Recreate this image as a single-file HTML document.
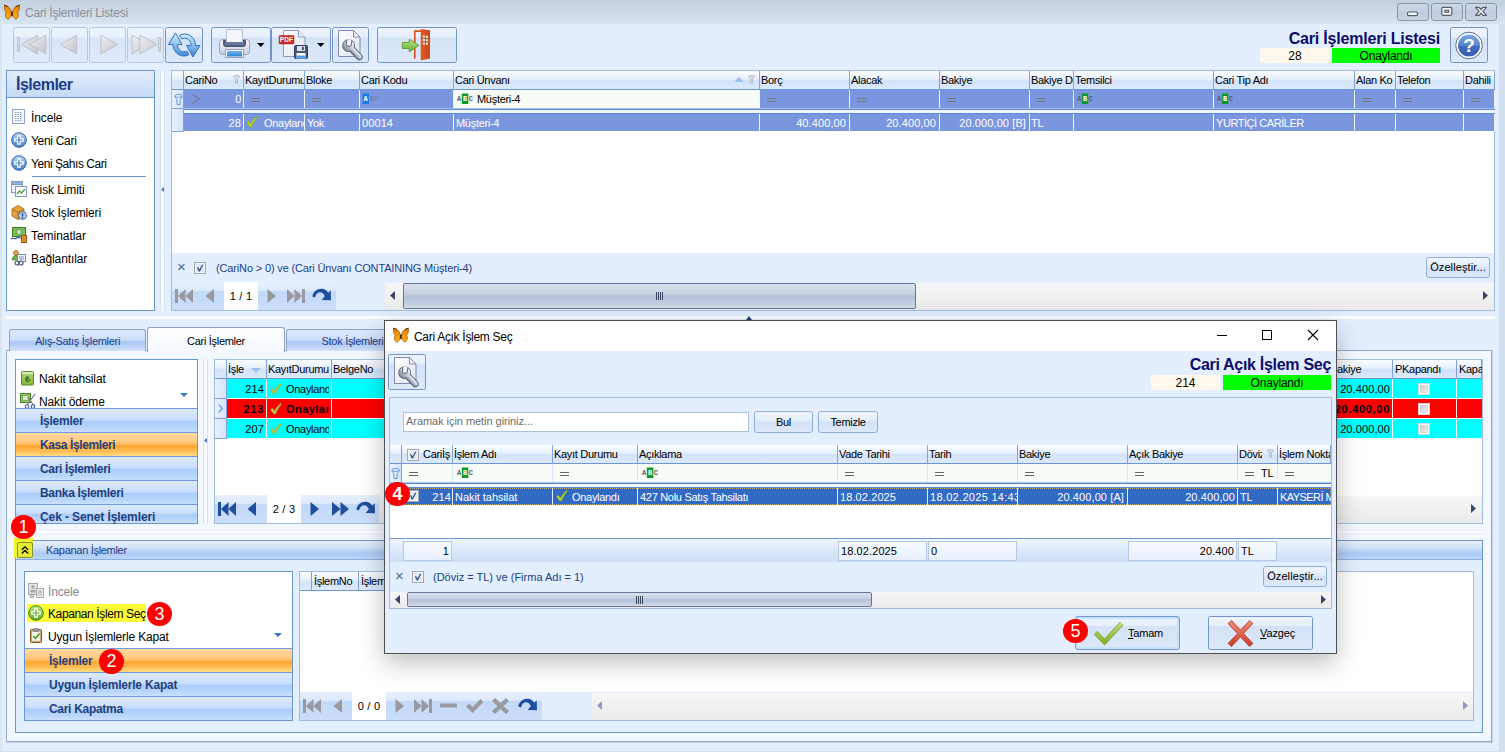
<!DOCTYPE html>
<html lang="tr"><head><meta charset="utf-8"><title>Cari İşlemleri Listesi</title>
<style>
*{box-sizing:border-box}
html,body{margin:0;padding:0}
body{width:1505px;height:752px;position:relative;overflow:hidden;background:#D2DFEF;font:11px "Liberation Sans","DejaVu Sans",sans-serif;color:#000}
.a{position:absolute}
.t{position:absolute;white-space:nowrap;overflow:hidden;font-size:11px;letter-spacing:-0.3px}
.s{position:absolute;white-space:nowrap;overflow:hidden;font-size:12px;letter-spacing:-0.4px}
.sb{position:absolute;white-space:nowrap;overflow:hidden;font-size:12px;font-weight:bold;letter-spacing:-0.1px;color:#1F3F7F}
.n{letter-spacing:0.1px}
.r{text-align:right}
.c{text-align:center}
.w{color:#fff}
.hd{background:linear-gradient(#FBFDFF 0%,#E6F0FC 45%,#D3E3F9 55%,#DCE9FB 100%);border-right:1px solid #7EA4DB;border-bottom:1px solid #6C97D6}
.btn{border:1px solid #7494C8;border-radius:2.5px;background:linear-gradient(#EDF4FD 0%,#E6EFFB 27%,#D3E2F6 29%,#DDE9FA 100%)}
.btnd{border:1px solid #B5C9E6;border-radius:2.5px;background:linear-gradient(#EDF4FD 0%,#E8F1FC 27%,#D8E5F8 29%,#E0EBFA 100%)}
.sbtn{border:1px solid #8FAFDD;border-radius:3px;background:linear-gradient(#F1F6FD 0%,#E2ECFA 45%,#D3E2F7 50%,#DEE9FA 100%)}
.gh{background:linear-gradient(#DCEAFC 0%,#C9DEFA 46%,#ABCDF9 54%,#B9D6FA 82%,#CBE0FC 100%);border-top:1px solid #6F9ADB}
.go{background:linear-gradient(#FFD9A2 0%,#FFC77A 44%,#FFA633 56%,#FFBE55 80%,#FFDD86 100%);border-top:1px solid #6F9ADB}
.nav{background:linear-gradient(#E6F0FD 0%,#DDEAFC 30%,#C3D9F9 34%,#CBDEF9 100%)}
.sc{background:linear-gradient(#F6F6F6,#EBEBEB)}
.badge{position:absolute;width:25.2px;height:24.8px;border-radius:50%;background:#FF0000;color:#fff;font-size:18px;line-height:25px;text-align:center;letter-spacing:0}
svg{position:absolute;overflow:visible}
</style></head>
<body>
<div class="a " style="left:0px;top:0px;width:1505px;height:24px;background:linear-gradient(#C2CFDC,#D8E5F1)"></div>
<div class="a " style="left:2px;top:24px;width:1497px;height:727px;background:#E3EFFF"></div>
<div class="a " style="left:0px;top:24px;width:2px;height:728px;background:#DAE5F2"></div>
<svg style="left:4px;top:5px" width="16" height="15" viewBox="0 0 16 15"><defs><linearGradient id="bf1" x1="0" y1="0" x2="0" y2="1"><stop offset="0" stop-color="#E07C00"/><stop offset="0.5" stop-color="#F59A06"/><stop offset="1" stop-color="#FFB20A"/></linearGradient></defs>
<path d="M7.200 6.800C6.600 3.200 4 0.600 0.500 0.300C0 2.800 0.500 5.800 2.200 7.200C0.800 8.800 1.200 12.500 3.600 14.200C5.500 13.800 6.800 11.500 7.300 9.500Z" fill="url(#bf1)" stroke="#7A3E0A" stroke-width="0.600"/>
<path d="M8.600 6.800C9.200 3.200 11.800 0.600 15.300 0.300C15.800 2.800 15.300 5.800 13.600 7.200C15 8.800 14.600 12.500 12.200 14.200C10.300 13.800 9 11.500 8.500 9.500Z" fill="url(#bf1)" stroke="#7A3E0A" stroke-width="0.600"/>
<path d="M0.300 0.200C1.500 0.400 2.600 0.900 3.600 1.600M15.500 0.200C14.300 0.400 13.200 0.900 12.200 1.600" stroke="#4A2208" stroke-width="1" fill="none"/>
<rect x="7.100" y="6.200" width="1.600" height="5.200" rx="0.800" fill="#3A1810"/></svg>
<div class="s" style="left:25px;top:4px;width:200px;height:18px;line-height:18px;color:#8E8E96;letter-spacing:-0.2px">Cari İşlemleri Listesi</div>
<div class="a " style="left:1397px;top:3px;width:32px;height:18px;border:1px solid #8796B2;border-radius:3px;background:linear-gradient(#CDD8E6,#C3CFDF 50%,#BFCCDD 52%,#CAD5E4)"></div>
<svg style="left:1397px;top:3px" width="32" height="18" viewBox="0 0 32 18"><rect x="10.500" y="9" width="10" height="3.600" rx="1.200" fill="#F1F2F4" stroke="#565E6E" stroke-width="1.200"/></svg>
<div class="a " style="left:1431px;top:3px;width:32px;height:18px;border:1px solid #8796B2;border-radius:3px;background:linear-gradient(#CDD8E6,#C3CFDF 50%,#BFCCDD 52%,#CAD5E4)"></div>
<svg style="left:1431px;top:3px" width="32" height="18" viewBox="0 0 32 18"><rect x="10.800" y="4.300" width="10" height="8" rx="1.200" fill="#F1F2F4" stroke="#565E6E" stroke-width="1.200"/><rect x="13.800" y="7.300" width="4" height="2" fill="#BCC8D8" stroke="#565E6E" stroke-width="1.100"/></svg>
<div class="a " style="left:1465px;top:3px;width:32px;height:18px;border:1px solid #8796B2;border-radius:3px;background:linear-gradient(#CDD8E6,#C3CFDF 50%,#BFCCDD 52%,#CAD5E4)"></div>
<svg style="left:1465px;top:3px" width="32" height="18" viewBox="0 0 32 18"><path d="M10.500 4.300h3.600l1.900 2.200l1.900-2.200h3.600l-3.600 4l3.600 4h-3.600l-1.900-2.200l-1.900 2.200h-3.600l3.600-4z" fill="#F1F2F4" stroke="#565E6E" stroke-width="1.200" stroke-linejoin="round"/></svg>
<div class="a btnd" style="left:13px;top:27px;width:37px;height:36px;"></div>
<svg style="left:13px;top:27px" width="37" height="36" viewBox="0 0 37 36"><defs><linearGradient id="gd" x1="0" y1="0" x2="1" y2="1"><stop offset="0" stop-color="#F2F2F2"/><stop offset="1" stop-color="#BFC3CB"/></linearGradient></defs><rect x="4.5" y="10.5" width="2" height="14" fill="url(#gd)" stroke="#BFC3CA" stroke-width="1"/><path d="M24.5 8.2V26.8L8.2 17.5z" fill="url(#gd)" stroke="#BFC3CA" stroke-width="1"/><path d="M32.800 8.2V26.8L16.500 17.5z" fill="url(#gd)" stroke="#BFC3CA" stroke-width="1"/></svg>
<div class="a btnd" style="left:51px;top:27px;width:37px;height:36px;"></div>
<svg style="left:51px;top:27px" width="37" height="36" viewBox="0 0 37 36"><defs><linearGradient id="gd" x1="0" y1="0" x2="1" y2="1"><stop offset="0" stop-color="#F2F2F2"/><stop offset="1" stop-color="#BFC3CB"/></linearGradient></defs><path d="M25.600 8.2V26.8L9.300 17.5z" fill="url(#gd)" stroke="#BFC3CA" stroke-width="1"/></svg>
<div class="a btnd" style="left:89px;top:27px;width:37px;height:36px;"></div>
<svg style="left:89px;top:27px" width="37" height="36" viewBox="0 0 37 36"><defs><linearGradient id="gd" x1="0" y1="0" x2="1" y2="1"><stop offset="0" stop-color="#F2F2F2"/><stop offset="1" stop-color="#BFC3CB"/></linearGradient></defs><path d="M12 8.2V26.8L28.600 17.5z" fill="url(#gd)" stroke="#BFC3CA" stroke-width="1"/></svg>
<div class="a btnd" style="left:127px;top:27px;width:37px;height:36px;"></div>
<svg style="left:127px;top:27px" width="37" height="36" viewBox="0 0 37 36"><defs><linearGradient id="gd" x1="0" y1="0" x2="1" y2="1"><stop offset="0" stop-color="#F2F2F2"/><stop offset="1" stop-color="#BFC3CB"/></linearGradient></defs><path d="M5 8.2V26.8L22 17.5z" fill="url(#gd)" stroke="#BFC3CA" stroke-width="1"/><path d="M13 8.2V26.8L30 17.5z" fill="url(#gd)" stroke="#BFC3CA" stroke-width="1"/><rect x="31.500" y="10.500" width="2" height="14" fill="url(#gd)" stroke="#BFC3CA" stroke-width="1"/></svg>
<div class="a btn" style="left:165px;top:27px;width:38px;height:36px;"></div>
<svg style="left:165px;top:27px" width="38" height="36" viewBox="0 0 38 36"><defs><linearGradient id="rb" x1="0" y1="0" x2="0" y2="1"><stop offset="0" stop-color="#DDF0FB"/><stop offset="0.5" stop-color="#8DC3EC"/><stop offset="1" stop-color="#3F88D0"/></linearGradient>
<linearGradient id="rb2" x1="0" y1="0" x2="0" y2="1"><stop offset="0" stop-color="#D5ECFA"/><stop offset="0.5" stop-color="#84BDE9"/><stop offset="1" stop-color="#3580CB"/></linearGradient></defs>
<path d="M10.500 6L3.500 17.500h4.400c0.300 6.500 5 11.500 11 11.500c2 0 3.600-0.500 5-1.300l-2-3.700c-0.900 0.500-1.900 0.800-3 0.800c-3.600 0-6.300-3-6.500-7.300h4.600z" fill="url(#rb)" stroke="#3273BC" stroke-width="1" stroke-linejoin="round"/>
<path d="M28 30L35 18.500h-4.400c-0.300-6.500-5-11.500-11-11.500c-2 0-3.600 0.500-5 1.300l2 3.700c0.900-0.500 1.900-0.800 3-0.800c3.600 0 6.300 3 6.500 7.300h-4.600z" fill="url(#rb2)" stroke="#3273BC" stroke-width="1" stroke-linejoin="round"/></svg>
<div class="a btn" style="left:211px;top:27px;width:60px;height:36px;"></div>
<svg style="left:211px;top:27px" width="59" height="36" viewBox="0 0 59 36"><defs><linearGradient id="pb" x1="0" y1="0" x2="0" y2="1"><stop offset="0" stop-color="#F4F6FB"/><stop offset="1" stop-color="#C5CDE2"/></linearGradient>
<linearGradient id="pt" x1="0" y1="0" x2="0" y2="1"><stop offset="0" stop-color="#6FB4EE"/><stop offset="1" stop-color="#2E86DC"/></linearGradient></defs>
<rect x="8.500" y="12.500" width="30" height="15" rx="3" fill="url(#pb)" stroke="#98A3C4"/>
<path d="M12 13h23v4c0 2-1.500 3-3 3h-17c-1.500 0-3-1-3-3z" fill="#4C5A7C"/>
<rect x="15.500" y="2.500" width="16" height="13" fill="#F5F6FA" stroke="#B9C0D4"/>
<path d="M14 15h19v3h-19z" fill="#6A7899"/>
<rect x="14.500" y="22.500" width="18" height="8" fill="#FAFBFE" stroke="#98A3C4"/>
<rect x="16" y="24" width="15" height="5.500" fill="url(#pt)"/><path d="M46 16h7.500l-3.750 4z" fill="#000"/></svg>
<div class="a btn" style="left:271px;top:27px;width:60px;height:36px;"></div>
<svg style="left:272px;top:27px" width="58" height="36" viewBox="0 0 58 36"><defs><linearGradient id="pg" x1="0" y1="0" x2="1" y2="1"><stop offset="0" stop-color="#FFFFFF"/><stop offset="1" stop-color="#DDE3F2"/></linearGradient></defs>
<path d="M11.500 3.500h15l6.500 6.500v19.500h-21.500z" fill="url(#pg)" stroke="#8E99BD"/>
<path d="M26.500 3.500v6.500h6.500" fill="#EEF1F8" stroke="#8E99BD"/>
<rect x="7" y="8.500" width="15" height="8.500" rx="1" fill="#CC2A26" stroke="#B01C1C" stroke-width="0.500"/>
<text x="14.500" y="15.200" font-family="Liberation Sans,sans-serif" font-size="6.500" font-weight="bold" fill="#fff" text-anchor="middle" letter-spacing="0.200">PDF</text>
<rect x="22.500" y="18.500" width="13" height="13" rx="1" fill="#4A5474" stroke="#353D58"/>
<rect x="25" y="19" width="8" height="5" fill="#D9DFEC"/><rect x="30" y="19.800" width="1.800" height="3.200" fill="#3A4668"/>
<rect x="24.500" y="26" width="9" height="5.500" fill="#FFFFFF"/><rect x="24.500" y="28.500" width="9" height="3" fill="#4F9BE6"/><path d="M45 16h7.500l-3.750 4z" fill="#000"/></svg>
<div class="a btn" style="left:332px;top:27px;width:37px;height:36px;"></div>
<svg style="left:332px;top:27px" width="37" height="36" viewBox="0 0 37 36"><defs><linearGradient id="wg1" x1="0" y1="0" x2="1" y2="1"><stop offset="0" stop-color="#FFFFFF"/><stop offset="1" stop-color="#DDE3F2"/></linearGradient>
<linearGradient id="wm1" x1="0" y1="0" x2="0" y2="1"><stop offset="0" stop-color="#F4F6F8"/><stop offset="0.45" stop-color="#C9CFD9"/><stop offset="1" stop-color="#7F8B9F"/></linearGradient>
<clipPath id="wc1"><circle cx="16.6" cy="18.6" r="6.300"/></clipPath></defs>
<path d="M6.500 3.500h15l6.500 6.500v19.500h-21.500z" fill="url(#wg1)" stroke="#8088B8"/>
<path d="M21.500 3.500v6.500h6.500z" fill="#F4F6FB" stroke="#8088B8" stroke-linejoin="round"/>
<g transform="rotate(47 16.6 18.6)">
<rect x="16.6" y="16.200000000000003" width="18" height="4.800" rx="2.400" fill="none" stroke="#586377" stroke-width="2"/>
<circle cx="16.6" cy="18.6" r="5.500" fill="none" stroke="#586377" stroke-width="1.800"/>
<rect x="16.6" y="16.200000000000003" width="18" height="4.800" rx="2.400" fill="url(#wm1)"/>
<circle cx="16.6" cy="18.6" r="5.500" fill="url(#wm1)"/>
</g>
<g clip-path="url(#wc1)"><rect transform="rotate(8 16.6 18.6)" x="14.100000000000001" y="9.600000000000001" width="5" height="9.500" rx="1" fill="#F1F3F9" stroke="#586377" stroke-width="0.900"/></g></svg>
<div class="a btn" style="left:377px;top:27px;width:80px;height:36px;"></div>
<svg style="left:377px;top:27px" width="80" height="36" viewBox="0 0 80 36"><defs><linearGradient id="ga" x1="0" y1="0" x2="0" y2="1"><stop offset="0" stop-color="#C3E88C"/><stop offset="1" stop-color="#5FA82C"/></linearGradient>
<linearGradient id="dr" x1="0" y1="0" x2="1" y2="0"><stop offset="0" stop-color="#E55A22"/><stop offset="1" stop-color="#C9481A"/></linearGradient></defs>
<path d="M37 3.300h8v1.700h-6.400v26.800h-1.600z" fill="#D9501F"/>
<path d="M43.700 2L53 3.300V31.400L43.700 33.500z" fill="url(#dr)"/>
<g fill="#DFF3EC"><rect x="45.800" y="8.500" width="2.200" height="2.300"/><rect x="49" y="8.700" width="2" height="2.200"/><rect x="45.800" y="12" width="2.200" height="2.200"/><rect x="49" y="12.100" width="2" height="2.100"/><rect x="45.800" y="15.600" width="2.200" height="2.200"/><rect x="49" y="15.600" width="2" height="2.100"/></g>
<path d="M25.300 15.500h7v-3.300l9.500 6.300l-9.500 6.300v-3.300h-7z" fill="url(#ga)" stroke="#62A030" stroke-linejoin="round"/></svg>
<div class="t" style="left:1200px;top:29px;width:240px;height:20px;line-height:20px;font-size:16px;font-weight:bold;color:#0D0D6B;text-align:right;letter-spacing:-0.2px">Cari İşlemleri Listesi</div>
<div class="t" style="left:1260px;top:48px;width:70px;height:15px;line-height:15px;background:#FFF8EC;text-align:center;font-size:12px;letter-spacing:0;line-height:16px">28</div>
<div class="t" style="left:1332px;top:48px;width:108px;height:15px;line-height:15px;background:#00FF00;text-align:center;font-size:12px;letter-spacing:-0.2px;line-height:16px">Onaylandı</div>
<div class="a btn" style="left:1450px;top:27px;width:38px;height:36px;"></div>
<svg style="left:1450px;top:27px" width="38" height="36" viewBox="0 0 38 36"><defs><linearGradient id="hg" x1="0" y1="0" x2="0" y2="1"><stop offset="0" stop-color="#7DA8E0"/><stop offset="0.5" stop-color="#5585CC"/><stop offset="0.55" stop-color="#3F6BBA"/><stop offset="1" stop-color="#3660B2"/></linearGradient></defs>
<circle cx="19" cy="18.500" r="13.300" fill="#FFFFFF" stroke="#5A6898" stroke-width="1"/>
<circle cx="19" cy="18.500" r="11" fill="url(#hg)"/>
<text x="19" y="24.500" font-family="Liberation Sans,sans-serif" font-size="19" font-weight="bold" fill="#fff" text-anchor="middle">?</text></svg>
<div class="a " style="left:6px;top:70px;width:149px;height:241px;border:1px solid #6A97D4;background:#fff"></div>
<div class="a " style="left:7px;top:71px;width:147px;height:27px;background:linear-gradient(#E4EEFC,#C4D9F7);border-bottom:1px solid #6A97D4"></div>
<div class="t" style="left:16px;top:74px;width:130px;height:22px;line-height:22px;font-size:16px;font-weight:bold;color:#1D3D86;letter-spacing:-0.5px">İşlemler</div>
<div class="s" style="left:31px;top:109px;width:120px;height:18px;line-height:18px;letter-spacing:-0.1px">İncele</div>
<svg style="left:11px;top:109px" width="15" height="15" viewBox="0 0 15 15"><rect x="1.500" y="0.500" width="12" height="14" fill="#F7FAFE" stroke="#8FA6CC"/><g stroke="#7F9AC8" stroke-width="1" stroke-dasharray="1.500 1"><path d="M4 3.500h7M4 5.500h7M4 7.500h7M4 9.500h7M4 11.500h7"/></g></svg>
<div class="s" style="left:31px;top:132px;width:120px;height:18px;line-height:18px;letter-spacing:-0.3px">Yeni Cari</div>
<svg style="left:11px;top:132px" width="16" height="16" viewBox="0 0 16 16"><defs><linearGradient id="pplus" x1="0" y1="0" x2="0" y2="1"><stop offset="0" stop-color="#B9D6F4"/><stop offset="1" stop-color="#3F7FCB"/></linearGradient></defs><circle cx="8" cy="8" r="7.300" fill="url(#pplus)" stroke="#2B62A8"/><path d="M6.200 3.200h3.600v3h3v3.600h-3v3h-3.600v-3h-3v-3.600h3z" fill="#fff"/><path d="M7.400 4.400h1.200v3h3v1.200h-3v3h-1.200v-3h-3v-1.200h3z" fill="#3F7FCB"/></svg>
<div class="s" style="left:31px;top:155px;width:120px;height:18px;line-height:18px;letter-spacing:-0.45px">Yeni Şahıs Cari</div>
<svg style="left:11px;top:155px" width="16" height="16" viewBox="0 0 16 16"><defs><linearGradient id="pplus" x1="0" y1="0" x2="0" y2="1"><stop offset="0" stop-color="#B9D6F4"/><stop offset="1" stop-color="#3F7FCB"/></linearGradient></defs><circle cx="8" cy="8" r="7.300" fill="url(#pplus)" stroke="#2B62A8"/><path d="M6.200 3.200h3.600v3h3v3.600h-3v3h-3.600v-3h-3v-3.600h3z" fill="#fff"/><path d="M7.400 4.400h1.200v3h3v1.200h-3v3h-1.200v-3h-3v-1.200h3z" fill="#3F7FCB"/></svg>
<div class="s" style="left:31px;top:181px;width:120px;height:18px;line-height:18px;letter-spacing:-0.1px">Risk Limiti</div>
<svg style="left:11px;top:181px" width="16" height="16" viewBox="0 0 16 16"><rect x="0.500" y="0.500" width="11" height="11" fill="#EAF1FB" stroke="#7D9ACB"/><rect x="0.500" y="0.500" width="11" height="3" fill="#8FB0E0" stroke="#7D9ACB"/><rect x="4.500" y="5.500" width="11" height="10" fill="#fff" stroke="#7D9ACB"/><path d="M6 13l2.500-3l2 2l3.500-4" fill="none" stroke="#3E9B3A" stroke-width="1.200"/></svg>
<div class="s" style="left:31px;top:204px;width:120px;height:18px;line-height:18px;letter-spacing:-0.15px">Stok İşlemleri</div>
<svg style="left:11px;top:204px" width="16" height="16" viewBox="0 0 16 16"><path d="M1 5l6-3.500l6 3.500v7l-6 3.500l-6-3.500z" fill="#E3A13A" stroke="#9A6514" stroke-width="0.800"/><path d="M1 5l6 3.500l6-3.500M7 8.500v7" fill="none" stroke="#9A6514" stroke-width="0.800"/><circle cx="11.500" cy="11.500" r="4" fill="#B9CCE8" stroke="#4F6FA8"/><rect x="10.800" y="9" width="1.400" height="3.500" fill="#2F4F8F"/><rect x="10.800" y="13" width="1.400" height="1.400" fill="#2F4F8F"/></svg>
<div class="s" style="left:31px;top:227px;width:120px;height:18px;line-height:18px;letter-spacing:-0.05px">Teminatlar</div>
<svg style="left:11px;top:227px" width="16" height="16" viewBox="0 0 16 16"><rect x="1.500" y="0.500" width="13" height="9" fill="#7DBB5A" stroke="#3E7A2A"/><circle cx="8" cy="5" r="2.500" fill="#CFE8BF" stroke="#3E7A2A" stroke-width="0.600"/><path d="M0 12c2-2 3.500 1 5.500-1s3 1 4.500 0" fill="none" stroke="#3A5FA8" stroke-width="1.200"/><rect x="10.500" y="8.500" width="5" height="7" fill="#E08A2A" stroke="#9A5A14"/></svg>
<div class="s" style="left:31px;top:250px;width:120px;height:18px;line-height:18px;letter-spacing:-0.1px">Bağlantılar</div>
<svg style="left:11px;top:250px" width="16" height="16" viewBox="0 0 16 16"><circle cx="5" cy="3" r="2.500" fill="#E09A4A" stroke="#9A5A1E" stroke-width="0.600"/><path d="M1 10c0-3 2-4.500 4-4.500s4 1.500 4 4.500z" fill="#6FAF4A" stroke="#3E7A2A" stroke-width="0.600"/><rect x="6.500" y="4.500" width="8" height="7" fill="#F4F6FA" stroke="#7F8FA8"/><path d="M8 7h5M8 9h5" stroke="#7F8FA8"/><circle cx="6" cy="13" r="2" fill="none" stroke="#4A5A78" stroke-width="1.200"/><circle cx="10" cy="13" r="2" fill="none" stroke="#4A5A78" stroke-width="1.200"/></svg>
<div class="a " style="left:32px;top:176px;width:114px;height:1px;background:#6A97D4"></div>
<div class="a " style="left:160px;top:70px;width:5px;height:241px;background:#F6FAFF;border-left:1px solid #D3E2F8;border-right:1px solid #D3E2F8"></div>
<svg style="left:161px;top:187px" width="3" height="5" viewBox="0 0 3 5"><path d="M3 0v5l-3-2.5z" fill="#4F79BE"/></svg>
<div class="a " style="left:171px;top:70px;width:1324px;height:241px;border:1px solid #A3BDE2;background:#fff"></div>
<div class="a hd" style="left:172px;top:71px;width:12px;height:19px;"></div>
<div class="a hd" style="left:184px;top:71px;width:60px;height:19px;"></div>
<div class="t" style="left:185px;top:71px;width:58px;height:18px;line-height:18px;">CariNo</div>
<div class="a hd" style="left:244px;top:71px;width:61px;height:19px;"></div>
<div class="t" style="left:245px;top:71px;width:59px;height:18px;line-height:18px;">KayıtDurumu</div>
<div class="a hd" style="left:305px;top:71px;width:55px;height:19px;"></div>
<div class="t" style="left:306px;top:71px;width:53px;height:18px;line-height:18px;">Bloke</div>
<div class="a hd" style="left:360px;top:71px;width:94px;height:19px;"></div>
<div class="t" style="left:361px;top:71px;width:92px;height:18px;line-height:18px;">Cari Kodu</div>
<div class="a hd" style="left:454px;top:71px;width:306px;height:19px;"></div>
<div class="t" style="left:455px;top:71px;width:304px;height:18px;line-height:18px;">Cari Ünvanı</div>
<div class="a hd" style="left:760px;top:71px;width:90px;height:19px;"></div>
<div class="t" style="left:761px;top:71px;width:88px;height:18px;line-height:18px;">Borç</div>
<div class="a hd" style="left:850px;top:71px;width:90px;height:19px;"></div>
<div class="t" style="left:851px;top:71px;width:88px;height:18px;line-height:18px;">Alacak</div>
<div class="a hd" style="left:940px;top:71px;width:90px;height:19px;"></div>
<div class="t" style="left:941px;top:71px;width:88px;height:18px;line-height:18px;">Bakiye</div>
<div class="a hd" style="left:1030px;top:71px;width:44px;height:19px;"></div>
<div class="t" style="left:1031px;top:71px;width:42px;height:18px;line-height:18px;">Bakiye Dö</div>
<div class="a hd" style="left:1074px;top:71px;width:140px;height:19px;"></div>
<div class="t" style="left:1075px;top:71px;width:138px;height:18px;line-height:18px;">Temsilci</div>
<div class="a hd" style="left:1214px;top:71px;width:141px;height:19px;"></div>
<div class="t" style="left:1215px;top:71px;width:139px;height:18px;line-height:18px;">Cari Tip Adı</div>
<div class="a hd" style="left:1355px;top:71px;width:41px;height:19px;"></div>
<div class="t" style="left:1356px;top:71px;width:39px;height:18px;line-height:18px;">Alan Ko</div>
<div class="a hd" style="left:1396px;top:71px;width:68px;height:19px;"></div>
<div class="t" style="left:1397px;top:71px;width:66px;height:18px;line-height:18px;">Telefon</div>
<div class="a hd" style="left:1464px;top:71px;width:31px;height:19px;"></div>
<div class="t" style="left:1465px;top:71px;width:29px;height:18px;line-height:18px;">Dahili</div>
<svg style="left:233px;top:75px" width="7" height="9" viewBox="0 0 7 9"><path d="M0.500 1.500c0-1.300 6-1.300 6 0c0 1-2 2-2 3v3.500h-2v-3.500c0-1-2-2-2-3z" fill="#D5DCE8" stroke="#A5B0C5" stroke-width="0.800"/></svg>
<svg style="left:748px;top:75px" width="7" height="9" viewBox="0 0 7 9"><path d="M0.500 1.500c0-1.300 6-1.300 6 0c0 1-2 2-2 3v3.500h-2v-3.500c0-1-2-2-2-3z" fill="#D5DCE8" stroke="#A5B0C5" stroke-width="0.800"/></svg>
<svg style="left:734px;top:77px" width="10" height="5" viewBox="0 0 10 5"><path d="M0 5h10l-5.0-5z" fill="#9DC0EE"/></svg>
<div class="a " style="left:172px;top:90px;width:12px;height:42px;background:linear-gradient(90deg,#EAF2FD,#D3E3F8);border-right:1px solid #7EA4DB;border-bottom:1px solid #7EA4DB"></div>
<div class="a " style="left:172px;top:108px;width:12px;height:1px;background:#7EA4DB"></div>
<svg style="left:174px;top:94px" width="9" height="12" viewBox="0 0 9 12"><path d="M1 1.500c0-1.300 7-1.300 7 0v1.500c0 1-2 1.800-2 3v4.500h-3v-4.500c0-1.200-2-2-2-3z M1 2.600c1 1 6 1 7 0" fill="#EAF2FD" stroke="#5C93DC" stroke-width="1"/></svg>
<div class="a " style="left:184px;top:90px;width:1311px;height:18px;background:#7A96DF"></div>
<div class="a " style="left:184px;top:108px;width:1311px;height:1px;background:#A9BFEA"></div>
<div class="a " style="left:184px;top:109px;width:1311px;height:1px;background:#5D8BD6"></div>
<div class="a " style="left:184px;top:110px;width:1311px;height:3px;background:#EFF5FD"></div>
<div class="a " style="left:184px;top:113px;width:1311px;height:1px;background:#5D8BD6"></div>
<div class="a " style="left:184px;top:114px;width:1311px;height:17px;background:#7A96DF"></div>
<div class="a " style="left:454px;top:90px;width:306px;height:18px;background:#F6FBF6"></div>
<div class="a " style="left:243px;top:90px;width:1px;height:18px;background:#EEF3FC"></div>
<div class="a " style="left:243px;top:114px;width:1px;height:17px;background:#EEF3FC"></div>
<div class="a " style="left:304px;top:90px;width:1px;height:18px;background:#EEF3FC"></div>
<div class="a " style="left:304px;top:114px;width:1px;height:17px;background:#EEF3FC"></div>
<div class="a " style="left:359px;top:90px;width:1px;height:18px;background:#EEF3FC"></div>
<div class="a " style="left:359px;top:114px;width:1px;height:17px;background:#EEF3FC"></div>
<div class="a " style="left:453px;top:90px;width:1px;height:18px;background:#EEF3FC"></div>
<div class="a " style="left:453px;top:114px;width:1px;height:17px;background:#EEF3FC"></div>
<div class="a " style="left:759px;top:90px;width:1px;height:18px;background:#EEF3FC"></div>
<div class="a " style="left:759px;top:114px;width:1px;height:17px;background:#EEF3FC"></div>
<div class="a " style="left:849px;top:90px;width:1px;height:18px;background:#EEF3FC"></div>
<div class="a " style="left:849px;top:114px;width:1px;height:17px;background:#EEF3FC"></div>
<div class="a " style="left:939px;top:90px;width:1px;height:18px;background:#EEF3FC"></div>
<div class="a " style="left:939px;top:114px;width:1px;height:17px;background:#EEF3FC"></div>
<div class="a " style="left:1029px;top:90px;width:1px;height:18px;background:#EEF3FC"></div>
<div class="a " style="left:1029px;top:114px;width:1px;height:17px;background:#EEF3FC"></div>
<div class="a " style="left:1073px;top:90px;width:1px;height:18px;background:#EEF3FC"></div>
<div class="a " style="left:1073px;top:114px;width:1px;height:17px;background:#EEF3FC"></div>
<div class="a " style="left:1213px;top:90px;width:1px;height:18px;background:#EEF3FC"></div>
<div class="a " style="left:1213px;top:114px;width:1px;height:17px;background:#EEF3FC"></div>
<div class="a " style="left:1354px;top:90px;width:1px;height:18px;background:#EEF3FC"></div>
<div class="a " style="left:1354px;top:114px;width:1px;height:17px;background:#EEF3FC"></div>
<div class="a " style="left:1395px;top:90px;width:1px;height:18px;background:#EEF3FC"></div>
<div class="a " style="left:1395px;top:114px;width:1px;height:17px;background:#EEF3FC"></div>
<div class="a " style="left:1463px;top:90px;width:1px;height:18px;background:#EEF3FC"></div>
<div class="a " style="left:1463px;top:114px;width:1px;height:17px;background:#EEF3FC"></div>
<div class="a " style="left:1494px;top:90px;width:1px;height:18px;background:#EEF3FC"></div>
<div class="a " style="left:1494px;top:114px;width:1px;height:17px;background:#EEF3FC"></div>
<div class="a " style="left:251px;top:98px;width:9px;height:1px;background:#777"></div>
<div class="a " style="left:251px;top:101px;width:9px;height:1px;background:#777"></div>
<div class="a " style="left:312px;top:98px;width:9px;height:1px;background:#777"></div>
<div class="a " style="left:312px;top:101px;width:9px;height:1px;background:#777"></div>
<div class="a " style="left:767px;top:98px;width:9px;height:1px;background:#777"></div>
<div class="a " style="left:767px;top:101px;width:9px;height:1px;background:#777"></div>
<div class="a " style="left:857px;top:98px;width:9px;height:1px;background:#777"></div>
<div class="a " style="left:857px;top:101px;width:9px;height:1px;background:#777"></div>
<div class="a " style="left:947px;top:98px;width:9px;height:1px;background:#777"></div>
<div class="a " style="left:947px;top:101px;width:9px;height:1px;background:#777"></div>
<div class="a " style="left:1037px;top:98px;width:9px;height:1px;background:#777"></div>
<div class="a " style="left:1037px;top:101px;width:9px;height:1px;background:#777"></div>
<div class="a " style="left:1362px;top:98px;width:9px;height:1px;background:#777"></div>
<div class="a " style="left:1362px;top:101px;width:9px;height:1px;background:#777"></div>
<div class="a " style="left:1403px;top:98px;width:9px;height:1px;background:#777"></div>
<div class="a " style="left:1403px;top:101px;width:9px;height:1px;background:#777"></div>
<div class="a " style="left:1471px;top:98px;width:9px;height:1px;background:#777"></div>
<div class="a " style="left:1471px;top:101px;width:9px;height:1px;background:#777"></div>
<svg style="left:192px;top:94px" width="8" height="10" viewBox="0 0 8 10"><path d="M0.500 0.500l7 4.500l-7 4.500" fill="none" stroke="#6E6E6E" stroke-width="1"/></svg>
<div class="t r w" style="left:200px;top:90px;width:41px;height:18px;line-height:18px;">0</div>
<svg style="left:363px;top:95px" width="17" height="9" viewBox="0 0 17 9"><rect x="-0.500" y="-1.500" width="6.500" height="10.500" fill="#1E7BE0"/><text x="0.600" y="6.300" font-family="Liberation Mono,monospace" font-size="7" font-weight="bold" fill="#fff">A</text><text x="6.400" y="6.300" font-family="Liberation Mono,monospace" font-size="7" font-weight="bold" fill="#6C7FAE">B</text><text x="11" y="6.300" font-family="Liberation Mono,monospace" font-size="7" font-weight="bold" fill="#6C7FAE">C</text></svg>
<svg style="left:457px;top:95px" width="17" height="9" viewBox="0 0 17 9"><text x="0" y="6.300" font-family="Liberation Mono,monospace" font-size="7" font-weight="bold" fill="#5F5F5F">A</text><rect x="4.800" y="-1.500" width="6.500" height="10.500" fill="#0E9A2A"/><text x="5.900" y="6.300" font-family="Liberation Mono,monospace" font-size="7" font-weight="bold" fill="#fff">B</text><text x="11.800" y="6.300" font-family="Liberation Mono,monospace" font-size="7" font-weight="bold" fill="#5F5F5F">C</text></svg>
<div class="t" style="left:477px;top:90px;width:200px;height:18px;line-height:18px;">Müşteri-4</div>
<svg style="left:1077px;top:95px" width="17" height="9" viewBox="0 0 17 9"><text x="0" y="6.300" font-family="Liberation Mono,monospace" font-size="7" font-weight="bold" fill="#5F5F5F">A</text><rect x="4.800" y="-1.500" width="6.500" height="10.500" fill="#0E9A2A"/><text x="5.900" y="6.300" font-family="Liberation Mono,monospace" font-size="7" font-weight="bold" fill="#fff">B</text><text x="11.800" y="6.300" font-family="Liberation Mono,monospace" font-size="7" font-weight="bold" fill="#5F5F5F">C</text></svg>
<svg style="left:1217px;top:95px" width="17" height="9" viewBox="0 0 17 9"><text x="0" y="6.300" font-family="Liberation Mono,monospace" font-size="7" font-weight="bold" fill="#5F5F5F">A</text><rect x="4.800" y="-1.500" width="6.500" height="10.500" fill="#0E9A2A"/><text x="5.900" y="6.300" font-family="Liberation Mono,monospace" font-size="7" font-weight="bold" fill="#fff">B</text><text x="11.800" y="6.300" font-family="Liberation Mono,monospace" font-size="7" font-weight="bold" fill="#5F5F5F">C</text></svg>
<div class="t r w n" style="left:190px;top:114px;width:51px;height:18px;line-height:18px;">28</div>
<svg style="left:246px;top:116px" width="12" height="12" viewBox="0 0 12 12"><path d="M0.500 6.500l2-1.300l2 2.500c1.800-3 3.800-5.500 6.300-7.500l0.600 1c-2.500 3-4.500 6.300-5.800 9.800h-1.900z" fill="#A8D02E" stroke="#7FA514" stroke-width="0.500"/></svg>
<div class="t w" style="left:264px;top:114px;width:40px;height:18px;line-height:18px;">Onaylandı</div>
<div class="t w" style="left:307px;top:114px;width:50px;height:18px;line-height:18px;">Yok</div>
<div class="t w n" style="left:362px;top:114px;width:80px;height:18px;line-height:18px;">00014</div>
<div class="t w" style="left:456px;top:114px;width:200px;height:18px;line-height:18px;">Müşteri-4</div>
<div class="t r w n" style="left:770px;top:114px;width:76px;height:18px;line-height:18px;">40.400,00</div>
<div class="t r w n" style="left:860px;top:114px;width:76px;height:18px;line-height:18px;">20.400,00</div>
<div class="t r w n" style="left:945px;top:114px;width:81px;height:18px;line-height:18px;">20.000,00 [B]</div>
<div class="t w" style="left:1031px;top:114px;width:30px;height:18px;line-height:18px;">TL</div>
<div class="t w" style="left:1216px;top:114px;width:130px;height:18px;line-height:18px;letter-spacing:-0.45px">YURTİÇİ CARİLER</div>
<div class="a " style="left:172px;top:253px;width:1322px;height:57px;background:#E3EFFF"></div>
<div class="t" style="left:177px;top:259px;width:12px;height:16px;line-height:16px;font-size:15px;color:#4A6499;letter-spacing:0">×</div>
<svg style="left:194px;top:262px" width="12" height="12" viewBox="0 0 12 12"><rect x="0.500" y="0.500" width="11" height="11" fill="#F7F8FA" stroke="#9EA7B3"/><rect x="2" y="2" width="8" height="8" fill="#E4E8EE"/><path d="M2.800 5.300l1.400 0l1.200 2.200l2.600-4.800l1.400 0l-3.500 6.800l-1.200 0z" fill="#35558F"/></svg>
<div class="t" style="left:216px;top:259px;width:400px;height:19px;line-height:19px;color:#1D3D86;letter-spacing:-0.15px">(CariNo &gt; 0) ve (Cari Ünvanı CONTAINING Müşteri-4)</div>
<div class="a sbtn" style="left:1426px;top:257px;width:64px;height:21px;"></div>
<div class="t" style="left:1426px;top:257px;width:64px;height:20px;line-height:20px;text-align:center;letter-spacing:0.1px">Özelleştir...</div>
<div class="a nav" style="left:172px;top:282px;width:164px;height:28px;"></div>
<div class="a " style="left:224px;top:282px;width:34px;height:28px;background:#fff"></div>
<div class="t" style="left:224px;top:287px;width:34px;height:19px;line-height:19px;text-align:center;letter-spacing:0.2px">1 / 1</div>
<svg style="left:175px;top:288px" width="19" height="16" viewBox="0 0 19 16"><g fill="#9A9A9E"><rect x="0" y="1" width="3" height="14"/><path d="M10.500 1v14l-7.500-7z"/><path d="M18 1v14l-7.500-7z"/></g></svg>
<svg style="left:204px;top:288px" width="19" height="16" viewBox="0 0 19 16"><g fill="#9A9A9E"><path d="M10 1v14l-8.500-7z"/></g></svg>
<svg style="left:266px;top:288px" width="19" height="16" viewBox="0 0 19 16"><g fill="#9A9A9E"><path d="M1.500 1v14l8.500-7z"/></g></svg>
<svg style="left:287px;top:288px" width="19" height="16" viewBox="0 0 19 16"><g fill="#9A9A9E"><path d="M0 1v14l7.500-7z"/><path d="M7.500 1v14l7.500-7z"/><rect x="15" y="1" width="3" height="14"/></g></svg>
<svg style="left:312px;top:288px" width="19" height="16" viewBox="0 0 19 16"><g fill="#1F4E9E"><path d="M0.300 8.500C1.300 3 6 0 10.500 0.800C13.200 1.300 15 2.800 16.200 4.800L18.700 2.200L19 12.300L9.700 12L12.800 8.300C12 6 10.500 4.500 8.500 4.200C6 3.900 4 5.500 3 9.500Z"/></g></svg>
<div class="a sc" style="left:386px;top:283px;width:1108px;height:27px;"></div>
<svg style="left:390px;top:291px" width="5" height="9" viewBox="0 0 5 9"><path d="M5 0v9l-5-4.5z" fill="#3A4663"/></svg>
<svg style="left:1483px;top:291px" width="5" height="9" viewBox="0 0 5 9"><path d="M0 0v9l5-4.5z" fill="#3A4663"/></svg>
<div class="a " style="left:403px;top:283px;width:513px;height:26px;border:1px solid #65759F;border-radius:2px;background:linear-gradient(#D9E0EC 0%,#C8D2E3 40%,#B4C1D8 52%,#C3CEE1 80%,#D5DDEB 100%)"></div>
<div class="a " style="left:656px;top:292px;width:1px;height:8px;background:#3A4663"></div>
<div class="a " style="left:658px;top:292px;width:1px;height:8px;background:#3A4663"></div>
<div class="a " style="left:660px;top:292px;width:1px;height:8px;background:#3A4663"></div>
<div class="a " style="left:662px;top:292px;width:1px;height:8px;background:#3A4663"></div>
<div class="a " style="left:6px;top:316px;width:1489px;height:4px;background:linear-gradient(#F4F8FF 0%,#FFFFFF 30%,#FFFFFF 65%,#CFE0FA 100%)"></div>
<svg style="left:746px;top:316px" width="6" height="4" viewBox="0 0 6 4"><path d="M0 4h6l-3.0-4z" fill="#1F3F7F"/></svg>
<div class="a " style="left:6px;top:350px;width:1486px;height:392px;border:1px solid #93A9CF;background:#F3F8FE;box-shadow:1px 1px 0 #C3D2E8"></div>
<div class="a " style="left:9px;top:329px;width:137px;height:22px;border:1px solid #8FA2C6;border-bottom:none;border-radius:3px 3px 0 0;background:linear-gradient(#DEEAFB 0%,#CDDFF9 45%,#ABC8F3 58%,#C1D7F7 85%,#D3E3FA 100%)"></div>
<div class="t" style="left:9px;top:332px;width:137px;height:19px;line-height:19px;text-align:center;color:#1D3D86">Alış-Satış İşlemleri</div>
<div class="a " style="left:286px;top:329px;width:133px;height:22px;border:1px solid #8FA2C6;border-bottom:none;border-radius:3px 3px 0 0;background:linear-gradient(#DEEAFB 0%,#CDDFF9 45%,#ABC8F3 58%,#C1D7F7 85%,#D3E3FA 100%)"></div>
<div class="t" style="left:286px;top:332px;width:133px;height:19px;line-height:19px;text-align:center;color:#1D3D86">Stok İşlemleri</div>
<div class="a " style="left:147px;top:327px;width:138px;height:25px;border:1px solid #8FA2C6;border-bottom:none;border-radius:3px 3px 0 0;background:linear-gradient(#FFFFFF,#F3F8FE)"></div>
<div class="t" style="left:147px;top:332px;width:138px;height:19px;line-height:19px;text-align:center">Cari İşlemler</div>
<div class="a " style="left:15px;top:359px;width:183px;height:165px;border:1px solid #6A97D4;background:#fff"></div>
<svg style="left:21px;top:371px" width="13" height="15" viewBox="0 0 13 15"><defs><linearGradient id="ntg" x1="0" y1="0" x2="0" y2="1"><stop offset="0" stop-color="#B5D878"/><stop offset="1" stop-color="#7FB23A"/></linearGradient></defs><rect x="0.500" y="0.500" width="12" height="13.500" rx="1" fill="url(#ntg)" stroke="#5B8A2A"/><rect x="1" y="1" width="11" height="2" fill="#D7ECB0"/><path d="M5.800 5v5.500c1.800 0 3-0.800 3.200-2.500M4.200 7.600l3.600-1.600M4.200 9.200l3.600-1.600" stroke="#2F5F14" stroke-width="1" fill="none"/></svg>
<div class="s" style="left:39px;top:370px;width:120px;height:18px;line-height:18px;letter-spacing:-0.15px">Nakit tahsilat</div>
<svg style="left:20px;top:393px" width="16" height="16" viewBox="0 0 16 16"><rect x="0.500" y="0.500" width="10" height="9" fill="#9CC66A" stroke="#4E7F2A"/><rect x="2.500" y="2.500" width="6" height="5" fill="#D7EBBF" stroke="#4E7F2A" stroke-width="0.500"/><path d="M15 1l-8 11M8 4l6 9" stroke="#6A7488" stroke-width="1.200"/><circle cx="7" cy="13.500" r="1.800" fill="none" stroke="#3A5FA8" stroke-width="1.100"/><circle cx="13" cy="13.500" r="1.800" fill="none" stroke="#3A5FA8" stroke-width="1.100"/></svg>
<div class="s" style="left:39px;top:393px;width:120px;height:15px;line-height:15px;line-height:18px;letter-spacing:-0.15px">Nakit ödeme</div>
<svg style="left:180px;top:393px" width="8" height="4" viewBox="0 0 8 4"><path d="M0 0h8l-4.0 4z" fill="#3F79C9"/></svg>
<div class="a gh" style="left:16px;top:408px;width:181px;height:24px;"></div>
<div class="sb" style="left:40px;top:411px;width:157px;height:20px;line-height:20px;letter-spacing:-0.25px">İşlemler</div>
<div class="a go" style="left:16px;top:432px;width:181px;height:24px;"></div>
<div class="sb" style="left:40px;top:435px;width:157px;height:20px;line-height:20px;letter-spacing:-0.4px">Kasa İşlemleri</div>
<div class="a gh" style="left:16px;top:456px;width:181px;height:24px;"></div>
<div class="sb" style="left:40px;top:459px;width:157px;height:20px;line-height:20px;letter-spacing:-0.35px">Cari İşlemleri</div>
<div class="a gh" style="left:16px;top:480px;width:181px;height:24px;"></div>
<div class="sb" style="left:40px;top:483px;width:157px;height:20px;line-height:20px;letter-spacing:-0.3px">Banka İşlemleri</div>
<div class="a gh" style="left:16px;top:504px;width:181px;height:19px;"></div>
<div class="sb" style="left:40px;top:507px;width:157px;height:19px;line-height:20px;letter-spacing:-0.1px">Çek - Senet İşlemleri</div>
<div class="a " style="left:203px;top:359px;width:5px;height:165px;background:#F6FAFF;border-left:1px solid #D3E2F8;border-right:1px solid #D3E2F8"></div>
<svg style="left:204px;top:438px" width="3" height="5" viewBox="0 0 3 5"><path d="M3 0v5l-3-2.5z" fill="#4F79BE"/></svg>
<div class="a " style="left:214px;top:359px;width:1269px;height:165px;border:1px solid #A3BDE2;background:#fff"></div>
<div class="a hd" style="left:215px;top:360px;width:12px;height:19px;"></div>
<div class="a hd" style="left:227px;top:360px;width:40px;height:19px;"></div>
<div class="t" style="left:228px;top:360px;width:38px;height:18px;line-height:18px;">İşle</div>
<div class="a hd" style="left:267px;top:360px;width:65px;height:19px;"></div>
<div class="t" style="left:268px;top:360px;width:63px;height:18px;line-height:18px;">KayıtDurumu</div>
<div class="a hd" style="left:332px;top:360px;width:89px;height:19px;"></div>
<div class="t" style="left:333px;top:360px;width:87px;height:18px;line-height:18px;">BelgeNo</div>
<svg style="left:251px;top:368px" width="10" height="5" viewBox="0 0 10 5"><path d="M0 0h10l-5.0 5z" fill="#9DC0EE"/></svg>
<div class="a hd" style="left:1328px;top:360px;width:65px;height:19px;"></div>
<div class="t" style="left:1330px;top:360px;width:63px;height:18px;line-height:18px;">Bakiye</div>
<div class="a hd" style="left:1393px;top:360px;width:64px;height:19px;"></div>
<div class="t" style="left:1395px;top:360px;width:62px;height:18px;line-height:18px;">PKapandı</div>
<div class="a hd" style="left:1457px;top:360px;width:25px;height:19px;"></div>
<div class="t" style="left:1459px;top:360px;width:23px;height:18px;line-height:18px;">Kapandı</div>
<div class="a " style="left:227px;top:379px;width:1255px;height:20px;background:#00FFFF"></div>
<div class="a " style="left:215px;top:379px;width:12px;height:20px;background:linear-gradient(90deg,#EAF2FD,#D3E3F8);border-right:1px solid #7EA4DB;border-bottom:1px solid #7EA4DB"></div>
<div class="a " style="left:266px;top:379px;width:1px;height:20px;background:#F4FBFF"></div>
<div class="a " style="left:331px;top:379px;width:1px;height:20px;background:#F4FBFF"></div>
<div class="a " style="left:420px;top:379px;width:1px;height:20px;background:#F4FBFF"></div>
<div class="a " style="left:1392px;top:379px;width:1px;height:20px;background:#F4FBFF"></div>
<div class="a " style="left:1456px;top:379px;width:1px;height:20px;background:#F4FBFF"></div>
<div class="t r n" style="left:228px;top:380px;width:36px;height:19px;line-height:19px;">214</div>
<svg style="left:270px;top:383px" width="12" height="12" viewBox="0 0 12 12"><path d="M0.500 6.500l2-1.300l2 2.500c1.800-3 3.800-5.500 6.300-7.500l0.600 1c-2.500 3-4.500 6.300-5.800 9.800h-1.900z" fill="#B9C74A" stroke="#8C9C2C" stroke-width="0.500"/></svg>
<div class="t" style="left:286px;top:380px;width:43px;height:19px;line-height:19px;">Onaylandı</div>
<div class="t r n" style="left:1300px;top:380px;width:90px;height:19px;line-height:19px;">20.400,00</div>
<svg style="left:1418px;top:383px" width="12" height="12" viewBox="0 0 12 12"><defs><linearGradient id="cg" x1="0" y1="0" x2="1" y2="1"><stop offset="0" stop-color="#CFCFCF"/><stop offset="1" stop-color="#EDEDED"/></linearGradient></defs><rect x="0.500" y="0.500" width="11" height="11" fill="#FFFFFF" stroke="#D4D8DC"/><rect x="2.500" y="2.500" width="7" height="7" fill="url(#cg)" stroke="#C2C5C9" stroke-width="0.600"/></svg>
<div class="a " style="left:227px;top:398px;width:1255px;height:1px;background:#F4FBFF"></div>
<div class="a " style="left:227px;top:399px;width:1255px;height:20px;background:#FF0000"></div>
<div class="a " style="left:215px;top:399px;width:12px;height:20px;background:linear-gradient(90deg,#EAF2FD,#D3E3F8);border-right:1px solid #7EA4DB;border-bottom:1px solid #7EA4DB"></div>
<div class="a " style="left:266px;top:399px;width:1px;height:20px;background:#FBE4E4"></div>
<div class="a " style="left:331px;top:399px;width:1px;height:20px;background:#FBE4E4"></div>
<div class="a " style="left:420px;top:399px;width:1px;height:20px;background:#FBE4E4"></div>
<div class="a " style="left:1392px;top:399px;width:1px;height:20px;background:#FBE4E4"></div>
<div class="a " style="left:1456px;top:399px;width:1px;height:20px;background:#FBE4E4"></div>
<div class="t r n" style="left:228px;top:400px;width:36px;height:19px;line-height:19px;font-weight:bold;letter-spacing:-0.1px;letter-spacing:0.7px">213</div>
<svg style="left:270px;top:403px" width="12" height="12" viewBox="0 0 12 12"><path d="M0.500 6.500l2-1.300l2 2.500c1.800-3 3.800-5.500 6.300-7.500l0.600 1c-2.500 3-4.500 6.300-5.800 9.800h-1.900z" fill="#B9C74A" stroke="#8C9C2C" stroke-width="0.500"/></svg>
<div class="t" style="left:286px;top:400px;width:43px;height:19px;line-height:19px;font-weight:bold;letter-spacing:0.45px;">Onaylandı</div>
<div class="t r n" style="left:1300px;top:400px;width:90px;height:19px;line-height:19px;font-weight:bold;letter-spacing:-0.1px;letter-spacing:0.7px">20.400,00</div>
<svg style="left:1418px;top:403px" width="12" height="12" viewBox="0 0 12 12"><defs><linearGradient id="cg" x1="0" y1="0" x2="1" y2="1"><stop offset="0" stop-color="#CFCFCF"/><stop offset="1" stop-color="#EDEDED"/></linearGradient></defs><rect x="0.500" y="0.500" width="11" height="11" fill="#FFFFFF" stroke="#D4D8DC"/><rect x="2.500" y="2.500" width="7" height="7" fill="url(#cg)" stroke="#C2C5C9" stroke-width="0.600"/></svg>
<div class="a " style="left:227px;top:418px;width:1255px;height:1px;background:#F4FBFF"></div>
<div class="a " style="left:227px;top:419px;width:1255px;height:20px;background:#00FFFF"></div>
<div class="a " style="left:215px;top:419px;width:12px;height:20px;background:linear-gradient(90deg,#EAF2FD,#D3E3F8);border-right:1px solid #7EA4DB;border-bottom:1px solid #7EA4DB"></div>
<div class="a " style="left:266px;top:419px;width:1px;height:20px;background:#F4FBFF"></div>
<div class="a " style="left:331px;top:419px;width:1px;height:20px;background:#F4FBFF"></div>
<div class="a " style="left:420px;top:419px;width:1px;height:20px;background:#F4FBFF"></div>
<div class="a " style="left:1392px;top:419px;width:1px;height:20px;background:#F4FBFF"></div>
<div class="a " style="left:1456px;top:419px;width:1px;height:20px;background:#F4FBFF"></div>
<div class="t r n" style="left:228px;top:420px;width:36px;height:19px;line-height:19px;">207</div>
<svg style="left:270px;top:423px" width="12" height="12" viewBox="0 0 12 12"><path d="M0.500 6.500l2-1.300l2 2.500c1.800-3 3.800-5.500 6.300-7.500l0.600 1c-2.500 3-4.500 6.300-5.800 9.800h-1.900z" fill="#B9C74A" stroke="#8C9C2C" stroke-width="0.500"/></svg>
<div class="t" style="left:286px;top:420px;width:43px;height:19px;line-height:19px;">Onaylandı</div>
<div class="t r n" style="left:1300px;top:420px;width:90px;height:19px;line-height:19px;">20.000,00</div>
<svg style="left:1418px;top:423px" width="12" height="12" viewBox="0 0 12 12"><defs><linearGradient id="cg" x1="0" y1="0" x2="1" y2="1"><stop offset="0" stop-color="#CFCFCF"/><stop offset="1" stop-color="#EDEDED"/></linearGradient></defs><rect x="0.500" y="0.500" width="11" height="11" fill="#FFFFFF" stroke="#D4D8DC"/><rect x="2.500" y="2.500" width="7" height="7" fill="url(#cg)" stroke="#C2C5C9" stroke-width="0.600"/></svg>
<div class="a " style="left:227px;top:438px;width:1255px;height:1px;background:#F4FBFF"></div>
<svg style="left:218px;top:404px" width="5" height="9" viewBox="0 0 5 9"><path d="M0.700 0.700l3.600 3.800l-3.600 3.800" fill="none" stroke="#5C93DC" stroke-width="1.200"/></svg>
<div class="a nav" style="left:215px;top:495px;width:164px;height:28px;"></div>
<div class="a " style="left:267px;top:495px;width:34px;height:28px;background:#fff"></div>
<div class="t" style="left:267px;top:500px;width:34px;height:19px;line-height:19px;text-align:center;letter-spacing:0.2px">2 / 3</div>
<svg style="left:218px;top:501px" width="19" height="16" viewBox="0 0 19 16"><g fill="#1F4E9E"><rect x="0" y="1" width="3" height="14"/><path d="M10.500 1v14l-7.500-7z"/><path d="M18 1v14l-7.500-7z"/></g></svg>
<svg style="left:246px;top:501px" width="19" height="16" viewBox="0 0 19 16"><g fill="#1F4E9E"><path d="M10 1v14l-8.500-7z"/></g></svg>
<svg style="left:309px;top:501px" width="19" height="16" viewBox="0 0 19 16"><g fill="#1F4E9E"><path d="M1.500 1v14l8.500-7z"/></g></svg>
<svg style="left:332px;top:501px" width="19" height="16" viewBox="0 0 19 16"><g fill="#1F4E9E"><path d="M0 1v14l8.500-7z"/><path d="M8.500 1v14l8.500-7z"/></g></svg>
<svg style="left:356px;top:501px" width="19" height="16" viewBox="0 0 19 16"><g fill="#1F4E9E"><path d="M0.300 8.500C1.300 3 6 0 10.500 0.800C13.200 1.300 15 2.800 16.200 4.800L18.700 2.200L19 12.300L9.700 12L12.800 8.300C12 6 10.500 4.500 8.500 4.200C6 3.900 4 5.500 3 9.500Z"/></g></svg>
<div class="a sc" style="left:379px;top:496px;width:1103px;height:27px;"></div>
<svg style="left:1471px;top:504px" width="5" height="9" viewBox="0 0 5 9"><path d="M0 0v9l5-4.5z" fill="#3A4663"/></svg>
<div class="a " style="left:15px;top:530px;width:1468px;height:4px;background:linear-gradient(#DCE8FA 0%,#FFFFFF 30%,#FFFFFF 70%,#DCE8FA 100%)"></div>
<div class="a " style="left:15px;top:540px;width:1468px;height:193px;border:1px solid #6A97D4;background:#E3EFFF"></div>
<div class="a " style="left:16px;top:541px;width:1466px;height:19px;background:linear-gradient(#E6F0FD 0%,#D3E3FA 35%,#ABCAF5 70%,#BDD6F8 100%);border-bottom:1px solid #8DAFE0"></div>
<div class="a " style="left:14px;top:538px;width:19px;height:20px;background:#F0F22C"></div>
<div class="a " style="left:17px;top:542px;width:16px;height:16px;border:1px solid #8A8F3A;background:#E8EA34;border-radius:2px"></div>
<svg style="left:21px;top:546px" width="8" height="8" viewBox="0 0 8 8"><path d="M0.800 3.800l3.200-3l3.200 3M0.800 7.500l3.200-3l3.200 3" fill="none" stroke="#000" stroke-width="1.300"/></svg>
<div class="t" style="left:46px;top:541px;width:200px;height:18px;line-height:18px;color:#1D3D86">Kapanan İşlemler</div>
<div class="a " style="left:24px;top:571px;width:269px;height:150px;border:1px solid #6A97D4;background:#fff"></div>
<svg style="left:28px;top:583px" width="16" height="16" viewBox="0 0 16 16"><rect x="0.500" y="0.500" width="9" height="11" fill="#E4E4E4" stroke="#A9A9A9"/><circle cx="5" cy="4" r="1.800" fill="#A9A9A9"/><path d="M2 9.500c0-2 1.500-3 3-3s3 1 3 3z" fill="#A9A9A9"/><rect x="8.500" y="5.500" width="7" height="9" fill="#EDEDED" stroke="#A9A9A9"/><path d="M10 8h4M10 10h4M10 12h4" stroke="#A9A9A9"/><circle cx="4" cy="13" r="2" fill="#C9C9C9" stroke="#A9A9A9"/></svg>
<div class="s" style="left:48px;top:583px;width:120px;height:18px;line-height:18px;color:#8A8A8A;letter-spacing:-0.15px">İncele</div>
<div class="a " style="left:27px;top:604px;width:119px;height:18px;background:#FCFC38"></div>
<svg style="left:28px;top:605px" width="16" height="16" viewBox="0 0 16 16"><defs><linearGradient id="pplusg" x1="0" y1="0" x2="0" y2="1"><stop offset="0" stop-color="#C5E68A"/><stop offset="1" stop-color="#5FA81E"/></linearGradient></defs><circle cx="8" cy="8" r="7.300" fill="url(#pplusg)" stroke="#4A8A14"/><path d="M6.200 3.200h3.600v3h3v3.600h-3v3h-3.600v-3h-3v-3.600h3z" fill="#fff"/><path d="M7.400 4.400h1.200v3h3v1.200h-3v3h-1.200v-3h-3v-1.200h3z" fill="#5FA81E"/></svg>
<div class="s" style="left:48px;top:605px;width:110px;height:18px;line-height:18px;letter-spacing:-0.38px">Kapanan İşlem Seç</div>
<svg style="left:30px;top:628px" width="12" height="15" viewBox="0 0 12 15"><rect x="0.500" y="1.500" width="11" height="13" rx="1" fill="#D8A05A" stroke="#8A5A1E"/><rect x="2" y="3.500" width="8" height="9.500" fill="#FBFBF5" stroke="#B9B9A0" stroke-width="0.500"/><rect x="3.500" y="0.500" width="5" height="3" rx="1" fill="#8F9AA8" stroke="#5A6473" stroke-width="0.600"/><path d="M3.500 8l2 2.500l4-5" fill="none" stroke="#3E9B2A" stroke-width="1.600"/></svg>
<div class="s" style="left:48px;top:628px;width:160px;height:18px;line-height:18px;letter-spacing:-0.15px">Uygun İşlemlerle Kapat</div>
<svg style="left:274px;top:633px" width="8" height="4" viewBox="0 0 8 4"><path d="M0 0h8l-4.0 4z" fill="#3F79C9"/></svg>
<div class="a go" style="left:25px;top:648px;width:267px;height:24px;"></div>
<div class="sb" style="left:49px;top:651px;width:243px;height:20px;line-height:20px;letter-spacing:-0.25px">İşlemler</div>
<div class="a gh" style="left:25px;top:672px;width:267px;height:24px;"></div>
<div class="sb" style="left:49px;top:675px;width:243px;height:20px;line-height:20px;letter-spacing:-0.2px">Uygun İşlemlerle Kapat</div>
<div class="a gh" style="left:25px;top:696px;width:267px;height:24px;"></div>
<div class="sb" style="left:49px;top:699px;width:243px;height:20px;line-height:20px;letter-spacing:-0.3px">Cari Kapatma</div>
<div class="a " style="left:299px;top:571px;width:1175px;height:150px;border:1px solid #A3BDE2;background:#fff"></div>
<div class="a hd" style="left:300px;top:572px;width:12px;height:19px;"></div>
<div class="a hd" style="left:312px;top:572px;width:47px;height:19px;"></div>
<div class="t" style="left:314px;top:572px;width:44px;height:18px;line-height:18px;">İşlemNo</div>
<div class="a hd" style="left:359px;top:572px;width:62px;height:19px;"></div>
<div class="t" style="left:361px;top:572px;width:59px;height:18px;line-height:18px;">İşlem</div>
<div class="a " style="left:300px;top:692px;width:1173px;height:28px;background:#E3EFFF"></div>
<div class="a nav" style="left:300px;top:692px;width:242px;height:28px;"></div>
<div class="a " style="left:352px;top:692px;width:34px;height:28px;background:#fff"></div>
<div class="t" style="left:352px;top:697px;width:34px;height:19px;line-height:19px;text-align:center;letter-spacing:0.2px">0 / 0</div>
<svg style="left:303px;top:698px" width="19" height="16" viewBox="0 0 19 16"><g fill="#9A9A9E"><rect x="0" y="1" width="3" height="14"/><path d="M10.500 1v14l-7.500-7z"/><path d="M18 1v14l-7.500-7z"/></g></svg>
<svg style="left:332px;top:698px" width="19" height="16" viewBox="0 0 19 16"><g fill="#9A9A9E"><path d="M10 1v14l-8.500-7z"/></g></svg>
<svg style="left:394px;top:698px" width="19" height="16" viewBox="0 0 19 16"><g fill="#9A9A9E"><path d="M1.500 1v14l8.500-7z"/></g></svg>
<svg style="left:414px;top:698px" width="19" height="16" viewBox="0 0 19 16"><g fill="#9A9A9E"><path d="M0 1v14l7.500-7z"/><path d="M7.500 1v14l7.500-7z"/><rect x="15" y="1" width="3" height="14"/></g></svg>
<svg style="left:440px;top:698px" width="19" height="16" viewBox="0 0 19 16"><g fill="#9A9A9E"><rect x="0" y="5.500" width="17" height="4"/></g></svg>
<svg style="left:466px;top:698px" width="19" height="16" viewBox="0 0 19 16"><g fill="#9A9A9E"><path d="M0 8.500l3-3l3.500 3.500l8-8l3 3l-11 11z"/></g></svg>
<svg style="left:492px;top:698px" width="19" height="16" viewBox="0 0 19 16"><g fill="#9A9A9E"><path d="M0 3l3-3l5.500 5l5.500-5l3 3l-5.500 5l5.500 5l-3 3l-5.500-5l-5.500 5l-3-3l5.500-5z"/></g></svg>
<svg style="left:518px;top:698px" width="19" height="16" viewBox="0 0 19 16"><g fill="#1F4E9E"><path d="M0.300 8.500C1.300 3 6 0 10.500 0.800C13.200 1.300 15 2.800 16.200 4.800L18.700 2.200L19 12.300L9.700 12L12.800 8.300C12 6 10.500 4.500 8.500 4.200C6 3.900 4 5.500 3 9.500Z"/></g></svg>
<div class="a sc" style="left:592px;top:693px;width:881px;height:27px;"></div>
<svg style="left:597px;top:701px" width="5" height="9" viewBox="0 0 5 9"><path d="M5 0v9l-5-4.5z" fill="#8F9DC0"/></svg>
<svg style="left:1463px;top:701px" width="5" height="9" viewBox="0 0 5 9"><path d="M0 0v9l5-4.5z" fill="#8F9DC0"/></svg>
<div class="a " style="left:384px;top:320px;width:953px;height:334px;border:1px solid #4F4F4F;background:#E3EFFF;box-shadow:0 8px 24px 0 rgba(0,0,0,0.26)"></div>
<div class="a " style="left:385px;top:321px;width:951px;height:30px;background:#fff"></div>
<svg style="left:393px;top:328px" width="16" height="15" viewBox="0 0 16 15"><defs><linearGradient id="bf2" x1="0" y1="0" x2="0" y2="1"><stop offset="0" stop-color="#E07C00"/><stop offset="0.5" stop-color="#F59A06"/><stop offset="1" stop-color="#FFB20A"/></linearGradient></defs>
<path d="M7.200 6.800C6.600 3.200 4 0.600 0.500 0.300C0 2.800 0.500 5.800 2.200 7.200C0.800 8.800 1.200 12.500 3.600 14.200C5.500 13.800 6.800 11.500 7.300 9.500Z" fill="url(#bf2)" stroke="#7A3E0A" stroke-width="0.600"/>
<path d="M8.600 6.800C9.200 3.200 11.800 0.600 15.300 0.300C15.800 2.800 15.300 5.800 13.600 7.200C15 8.800 14.600 12.500 12.200 14.200C10.300 13.800 9 11.500 8.500 9.500Z" fill="url(#bf2)" stroke="#7A3E0A" stroke-width="0.600"/>
<path d="M0.300 0.200C1.500 0.400 2.600 0.900 3.600 1.600M15.500 0.200C14.300 0.400 13.200 0.900 12.200 1.600" stroke="#4A2208" stroke-width="1" fill="none"/>
<rect x="7.100" y="6.200" width="1.600" height="5.200" rx="0.800" fill="#3A1810"/></svg>
<div class="s" style="left:414px;top:327px;width:200px;height:20px;line-height:20px;color:#000;letter-spacing:-0.3px">Cari Açık İşlem Seç</div>
<svg style="left:1217px;top:330px" width="10" height="10" viewBox="0 0 10 10"><path d="M0 5.5h10" stroke="#000" stroke-width="1"/></svg>
<svg style="left:1262px;top:330px" width="10" height="10" viewBox="0 0 10 10"><rect x="0.5" y="0.5" width="9" height="9" fill="none" stroke="#000"/></svg>
<svg style="left:1308px;top:330px" width="10" height="10" viewBox="0 0 10 10"><path d="M0 0L10 10M10 0L0 10" stroke="#000" stroke-width="1.1"/></svg>
<div class="a btn" style="left:388px;top:354px;width:38px;height:36px;"></div>
<svg style="left:388px;top:354px" width="37" height="36" viewBox="0 0 37 36"><defs><linearGradient id="wg2" x1="0" y1="0" x2="1" y2="1"><stop offset="0" stop-color="#FFFFFF"/><stop offset="1" stop-color="#DDE3F2"/></linearGradient>
<linearGradient id="wm2" x1="0" y1="0" x2="0" y2="1"><stop offset="0" stop-color="#F4F6F8"/><stop offset="0.45" stop-color="#C9CFD9"/><stop offset="1" stop-color="#7F8B9F"/></linearGradient>
<clipPath id="wc2"><circle cx="16.6" cy="18.6" r="6.300"/></clipPath></defs>
<path d="M6.500 3.500h15l6.500 6.500v19.500h-21.500z" fill="url(#wg2)" stroke="#8088B8"/>
<path d="M21.500 3.500v6.500h6.500z" fill="#F4F6FB" stroke="#8088B8" stroke-linejoin="round"/>
<g transform="rotate(47 16.6 18.6)">
<rect x="16.6" y="16.200000000000003" width="18" height="4.800" rx="2.400" fill="none" stroke="#586377" stroke-width="2"/>
<circle cx="16.6" cy="18.6" r="5.500" fill="none" stroke="#586377" stroke-width="1.800"/>
<rect x="16.6" y="16.200000000000003" width="18" height="4.800" rx="2.400" fill="url(#wm2)"/>
<circle cx="16.6" cy="18.6" r="5.500" fill="url(#wm2)"/>
</g>
<g clip-path="url(#wc2)"><rect transform="rotate(8 16.6 18.6)" x="14.100000000000001" y="9.600000000000001" width="5" height="9.500" rx="1" fill="#F1F3F9" stroke="#586377" stroke-width="0.900"/></g></svg>
<div class="t" style="left:1100px;top:355px;width:231px;height:20px;line-height:20px;font-size:16px;font-weight:bold;color:#0D0D6B;text-align:right;letter-spacing:-0.3px">Cari Açık İşlem Seç</div>
<div class="t" style="left:1151px;top:375px;width:69px;height:15px;line-height:15px;background:#FFF8EC;text-align:center;font-size:12px;letter-spacing:0;line-height:16px">214</div>
<div class="t" style="left:1223px;top:375px;width:108px;height:15px;line-height:15px;background:#00FF00;text-align:center;font-size:12px;letter-spacing:-0.2px;line-height:16px">Onaylandı</div>
<div class="a " style="left:389px;top:397px;width:943px;height:212px;border:1px solid #A3BDE2;background:#E3EFFF"></div>
<div class="a " style="left:403px;top:412px;width:346px;height:20px;border:1px solid #ABC1DE;background:#fff"></div>
<div class="t" style="left:406px;top:412px;width:300px;height:18px;line-height:18px;color:#6B6B6B;letter-spacing:-0.05px">Aramak için metin giriniz...</div>
<div class="a sbtn" style="left:754px;top:411px;width:59px;height:22px;"></div>
<div class="t" style="left:754px;top:412px;width:59px;height:20px;line-height:20px;text-align:center">Bul</div>
<div class="a sbtn" style="left:818px;top:411px;width:60px;height:22px;"></div>
<div class="t" style="left:818px;top:412px;width:60px;height:20px;line-height:20px;text-align:center">Temizle</div>
<div class="a hd" style="left:390px;top:445px;width:12px;height:19px;"></div>
<div class="a hd" style="left:402px;top:445px;width:51px;height:19px;"></div>
<div class="t" style="left:423px;top:445px;width:29px;height:18px;line-height:18px;">Cariİş</div>
<div class="a hd" style="left:453px;top:445px;width:100px;height:19px;"></div>
<div class="t" style="left:454px;top:445px;width:98px;height:18px;line-height:18px;">İşlem Adı</div>
<div class="a hd" style="left:553px;top:445px;width:85px;height:19px;"></div>
<div class="t" style="left:554px;top:445px;width:83px;height:18px;line-height:18px;">Kayıt Durumu</div>
<div class="a hd" style="left:638px;top:445px;width:200px;height:19px;"></div>
<div class="t" style="left:639px;top:445px;width:198px;height:18px;line-height:18px;">Açıklama</div>
<div class="a hd" style="left:838px;top:445px;width:90px;height:19px;"></div>
<div class="t" style="left:839px;top:445px;width:88px;height:18px;line-height:18px;">Vade Tarihi</div>
<div class="a hd" style="left:928px;top:445px;width:90px;height:19px;"></div>
<div class="t" style="left:929px;top:445px;width:88px;height:18px;line-height:18px;">Tarih</div>
<div class="a hd" style="left:1018px;top:445px;width:110px;height:19px;"></div>
<div class="t" style="left:1019px;top:445px;width:108px;height:18px;line-height:18px;">Bakiye</div>
<div class="a hd" style="left:1128px;top:445px;width:110px;height:19px;"></div>
<div class="t" style="left:1129px;top:445px;width:108px;height:18px;line-height:18px;">Açık Bakiye</div>
<div class="a hd" style="left:1238px;top:445px;width:40px;height:19px;"></div>
<div class="t" style="left:1239px;top:445px;width:23px;height:18px;line-height:18px;">Döviz</div>
<div class="a hd" style="left:1278px;top:445px;width:53px;height:19px;"></div>
<div class="t" style="left:1279px;top:445px;width:51px;height:18px;line-height:18px;">İşlem Noktası</div>
<svg style="left:407px;top:449px" width="12" height="12" viewBox="0 0 12 12"><rect x="0.500" y="0.500" width="11" height="11" fill="#F7F8FA" stroke="#9EA7B3"/><rect x="2" y="2" width="8" height="8" fill="#E4E8EE"/><path d="M2.800 5.300l1.400 0l1.200 2.200l2.600-4.800l1.400 0l-3.500 6.800l-1.200 0z" fill="#35558F"/></svg>
<svg style="left:1267px;top:449px" width="7" height="9" viewBox="0 0 7 9"><path d="M0.500 1.500c0-1.300 6-1.300 6 0c0 1-2 2-2 3v3.500h-2v-3.500c0-1-2-2-2-3z" fill="#D5DCE8" stroke="#A5B0C5" stroke-width="0.800"/></svg>
<div class="a " style="left:390px;top:464px;width:941px;height:18px;background:#F6FBF6"></div>
<div class="a " style="left:390px;top:464px;width:12px;height:19px;background:linear-gradient(90deg,#EAF2FD,#D3E3F8);border-right:1px solid #7EA4DB"></div>
<svg style="left:391px;top:468px" width="9" height="12" viewBox="0 0 9 12"><path d="M1 1.500c0-1.300 7-1.300 7 0v1.500c0 1-2 1.800-2 3v4.500h-3v-4.500c0-1.200-2-2-2-3z M1 2.600c1 1 6 1 7 0" fill="#EAF2FD" stroke="#5C93DC" stroke-width="1"/></svg>
<div class="a " style="left:390px;top:482px;width:941px;height:1px;background:#A9BFEA"></div>
<div class="a " style="left:390px;top:483px;width:941px;height:1px;background:#5D8BD6"></div>
<div class="a " style="left:390px;top:484px;width:941px;height:3px;background:#EFF5FD"></div>
<div class="a " style="left:390px;top:487px;width:941px;height:1px;background:#5D8BD6"></div>
<div class="a " style="left:390px;top:488px;width:941px;height:50px;background:#fff"></div>
<div class="a " style="left:452px;top:464px;width:1px;height:18px;background:#DCE6F3"></div>
<div class="a " style="left:552px;top:464px;width:1px;height:18px;background:#DCE6F3"></div>
<div class="a " style="left:637px;top:464px;width:1px;height:18px;background:#DCE6F3"></div>
<div class="a " style="left:837px;top:464px;width:1px;height:18px;background:#DCE6F3"></div>
<div class="a " style="left:927px;top:464px;width:1px;height:18px;background:#DCE6F3"></div>
<div class="a " style="left:1017px;top:464px;width:1px;height:18px;background:#DCE6F3"></div>
<div class="a " style="left:1127px;top:464px;width:1px;height:18px;background:#DCE6F3"></div>
<div class="a " style="left:1237px;top:464px;width:1px;height:18px;background:#DCE6F3"></div>
<div class="a " style="left:1277px;top:464px;width:1px;height:18px;background:#DCE6F3"></div>
<div class="a " style="left:409px;top:472px;width:9px;height:1px;background:#666"></div>
<div class="a " style="left:409px;top:475px;width:9px;height:1px;background:#666"></div>
<div class="a " style="left:560px;top:472px;width:9px;height:1px;background:#666"></div>
<div class="a " style="left:560px;top:475px;width:9px;height:1px;background:#666"></div>
<div class="a " style="left:845px;top:472px;width:9px;height:1px;background:#666"></div>
<div class="a " style="left:845px;top:475px;width:9px;height:1px;background:#666"></div>
<div class="a " style="left:935px;top:472px;width:9px;height:1px;background:#666"></div>
<div class="a " style="left:935px;top:475px;width:9px;height:1px;background:#666"></div>
<div class="a " style="left:1025px;top:472px;width:9px;height:1px;background:#666"></div>
<div class="a " style="left:1025px;top:475px;width:9px;height:1px;background:#666"></div>
<div class="a " style="left:1135px;top:472px;width:9px;height:1px;background:#666"></div>
<div class="a " style="left:1135px;top:475px;width:9px;height:1px;background:#666"></div>
<div class="a " style="left:1245px;top:472px;width:9px;height:1px;background:#666"></div>
<div class="a " style="left:1245px;top:475px;width:9px;height:1px;background:#666"></div>
<div class="a " style="left:1285px;top:472px;width:9px;height:1px;background:#666"></div>
<div class="a " style="left:1285px;top:475px;width:9px;height:1px;background:#666"></div>
<svg style="left:457px;top:469px" width="17" height="9" viewBox="0 0 17 9"><text x="0" y="6.300" font-family="Liberation Mono,monospace" font-size="7" font-weight="bold" fill="#5F5F5F">A</text><rect x="4.800" y="-1.500" width="6.500" height="10.500" fill="#0E9A2A"/><text x="5.900" y="6.300" font-family="Liberation Mono,monospace" font-size="7" font-weight="bold" fill="#fff">B</text><text x="11.800" y="6.300" font-family="Liberation Mono,monospace" font-size="7" font-weight="bold" fill="#5F5F5F">C</text></svg>
<svg style="left:642px;top:469px" width="17" height="9" viewBox="0 0 17 9"><text x="0" y="6.300" font-family="Liberation Mono,monospace" font-size="7" font-weight="bold" fill="#5F5F5F">A</text><rect x="4.800" y="-1.500" width="6.500" height="10.500" fill="#0E9A2A"/><text x="5.900" y="6.300" font-family="Liberation Mono,monospace" font-size="7" font-weight="bold" fill="#fff">B</text><text x="11.800" y="6.300" font-family="Liberation Mono,monospace" font-size="7" font-weight="bold" fill="#5F5F5F">C</text></svg>
<div class="t" style="left:1261px;top:464px;width:16px;height:18px;line-height:18px;">TL</div>
<div class="a " style="left:402px;top:488px;width:929px;height:17px;background:#316AC5;outline:1px dotted #C8B070;outline-offset:-1px"></div>
<div class="a " style="left:390px;top:488px;width:12px;height:17px;background:linear-gradient(90deg,#EAF2FD,#D3E3F8);border-right:1px solid #7EA4DB;border-bottom:1px solid #7EA4DB"></div>
<div class="a " style="left:452px;top:488px;width:1px;height:17px;background:#E6ECF8"></div>
<div class="a " style="left:552px;top:488px;width:1px;height:17px;background:#E6ECF8"></div>
<div class="a " style="left:637px;top:488px;width:1px;height:17px;background:#E6ECF8"></div>
<div class="a " style="left:837px;top:488px;width:1px;height:17px;background:#E6ECF8"></div>
<div class="a " style="left:927px;top:488px;width:1px;height:17px;background:#E6ECF8"></div>
<div class="a " style="left:1017px;top:488px;width:1px;height:17px;background:#E6ECF8"></div>
<div class="a " style="left:1127px;top:488px;width:1px;height:17px;background:#E6ECF8"></div>
<div class="a " style="left:1237px;top:488px;width:1px;height:17px;background:#E6ECF8"></div>
<div class="a " style="left:1277px;top:488px;width:1px;height:17px;background:#E6ECF8"></div>
<svg style="left:407px;top:490px" width="12" height="12" viewBox="0 0 12 12"><rect x="0.500" y="0.500" width="11" height="11" fill="#F7F8FA" stroke="#9EA7B3"/><rect x="2" y="2" width="8" height="8" fill="#E4E8EE"/><path d="M2.800 5.300l1.400 0l1.200 2.200l2.600-4.800l1.400 0l-3.500 6.800l-1.200 0z" fill="#35558F"/></svg>
<div class="t r w n" style="left:420px;top:488px;width:31px;height:18px;line-height:18px;">214</div>
<div class="t w" style="left:455px;top:488px;width:97px;height:18px;line-height:18px;letter-spacing:-0.05px">Nakit tahsilat</div>
<svg style="left:556px;top:490px" width="12" height="12" viewBox="0 0 12 12"><path d="M0.500 6.500l2-1.300l2 2.500c1.800-3 3.800-5.500 6.300-7.500l0.600 1c-2.500 3-4.500 6.300-5.800 9.800h-1.900z" fill="#A8D02E" stroke="#7FA514" stroke-width="0.500"/></svg>
<div class="t w" style="left:572px;top:488px;width:65px;height:18px;line-height:18px;">Onaylandı</div>
<div class="t w" style="left:640px;top:488px;width:190px;height:18px;line-height:18px;">427 Nolu Satış Tahsilatı</div>
<div class="t w n" style="left:840px;top:488px;width:87px;height:18px;line-height:18px;">18.02.2025</div>
<div class="t w n" style="left:930px;top:488px;width:87px;height:18px;line-height:18px;letter-spacing:0.3px">18.02.2025 14:43</div>
<div class="t r w n" style="left:1020px;top:488px;width:104px;height:18px;line-height:18px;">20.400,00 [A]</div>
<div class="t r w n" style="left:1130px;top:488px;width:105px;height:18px;line-height:18px;">20.400,00</div>
<div class="t w" style="left:1240px;top:488px;width:30px;height:18px;line-height:18px;">TL</div>
<div class="t w" style="left:1280px;top:488px;width:51px;height:18px;line-height:18px;letter-spacing:-0.55px">KAYSERİ M</div>
<div class="a " style="left:390px;top:538px;width:941px;height:24px;background:linear-gradient(#F1F6FD 0%,#DCE8FA 50%,#CDDEF7 100%);border-top:1px solid #6C97D6"></div>
<div class="a " style="left:403px;top:541px;width:49px;height:20px;border:1px solid #B5C9E6;background:linear-gradient(#F8FBFF,#E6EFFC)"></div>
<div class="t" style="left:406px;top:542px;width:43px;height:19px;line-height:19px;text-align:right;letter-spacing:0.1px">1</div>
<div class="a " style="left:838px;top:541px;width:89px;height:20px;border:1px solid #B5C9E6;background:linear-gradient(#F8FBFF,#E6EFFC)"></div>
<div class="t" style="left:841px;top:542px;width:83px;height:19px;line-height:19px;text-align:left;letter-spacing:0.1px">18.02.2025</div>
<div class="a " style="left:928px;top:541px;width:89px;height:20px;border:1px solid #B5C9E6;background:linear-gradient(#F8FBFF,#E6EFFC)"></div>
<div class="t" style="left:931px;top:542px;width:83px;height:19px;line-height:19px;text-align:left;letter-spacing:0.1px">0</div>
<div class="a " style="left:1128px;top:541px;width:109px;height:20px;border:1px solid #B5C9E6;background:linear-gradient(#F8FBFF,#E6EFFC)"></div>
<div class="t" style="left:1131px;top:542px;width:103px;height:19px;line-height:19px;text-align:right;letter-spacing:0.1px">20.400</div>
<div class="a " style="left:1238px;top:541px;width:39px;height:20px;border:1px solid #B5C9E6;background:linear-gradient(#F8FBFF,#E6EFFC)"></div>
<div class="t" style="left:1241px;top:542px;width:33px;height:19px;line-height:19px;text-align:left;letter-spacing:0.1px">TL</div>
<div class="t" style="left:395px;top:568px;width:12px;height:16px;line-height:16px;font-size:15px;color:#4A6499;letter-spacing:0">×</div>
<svg style="left:412px;top:571px" width="12" height="12" viewBox="0 0 12 12"><rect x="0.500" y="0.500" width="11" height="11" fill="#F7F8FA" stroke="#9EA7B3"/><rect x="2" y="2" width="8" height="8" fill="#E4E8EE"/><path d="M2.800 5.300l1.400 0l1.200 2.200l2.600-4.800l1.400 0l-3.500 6.800l-1.200 0z" fill="#35558F"/></svg>
<div class="t" style="left:433px;top:568px;width:300px;height:19px;line-height:19px;color:#1D3D86;letter-spacing:0">(Döviz = TL) ve (Firma Adı = 1)</div>
<div class="a sbtn" style="left:1263px;top:566px;width:64px;height:21px;"></div>
<div class="t" style="left:1263px;top:566px;width:64px;height:20px;line-height:20px;text-align:center;letter-spacing:0.1px">Özelleştir...</div>
<div class="a sc" style="left:390px;top:592px;width:941px;height:16px;"></div>
<svg style="left:395px;top:595px" width="5" height="9" viewBox="0 0 5 9"><path d="M5 0v9l-5-4.5z" fill="#3A4663"/></svg>
<svg style="left:1321px;top:595px" width="5" height="9" viewBox="0 0 5 9"><path d="M0 0v9l5-4.5z" fill="#3A4663"/></svg>
<div class="a " style="left:407px;top:592px;width:465px;height:15px;border:1px solid #65759F;border-radius:2px;background:linear-gradient(#D9E0EC 0%,#C8D2E3 40%,#B4C1D8 52%,#C3CEE1 80%,#D5DDEB 100%)"></div>
<div class="a " style="left:636px;top:596px;width:1px;height:8px;background:#3A4663"></div>
<div class="a " style="left:638px;top:596px;width:1px;height:8px;background:#3A4663"></div>
<div class="a " style="left:640px;top:596px;width:1px;height:8px;background:#3A4663"></div>
<div class="a " style="left:642px;top:596px;width:1px;height:8px;background:#3A4663"></div>
<div class="a " style="left:1075px;top:616px;width:105px;height:34px;border:1px solid #7698CE;border-radius:3px;background:linear-gradient(#EDF4FD 0%,#E6EFFB 28%,#D4E2F6 30%,#DDE9FA 100%);box-shadow:inset 0 0 0 2px #C3E3FC"></div>
<svg style="left:1094px;top:620px" width="29" height="26" viewBox="0 0 29 26"><defs><linearGradient id="bc" gradientUnits="userSpaceOnUse" x1="0" y1="2" x2="0" y2="24"><stop offset="0" stop-color="#C6E27E"/><stop offset="1" stop-color="#7DAE28"/></linearGradient></defs>
<path d="M1.500 12.800L10.600 22L27.600 3.600" fill="none" stroke="#82A33A" stroke-width="4.800" stroke-linejoin="miter"/>
<path d="M1.500 12.800L10.600 22L27.600 3.600" fill="none" stroke="url(#bc)" stroke-width="3.400" stroke-linejoin="miter"/></svg>
<div class="t" style="left:1128px;top:624px;width:50px;height:18px;line-height:18px;letter-spacing:-0.2px"><u>T</u>amam</div>
<div class="a btn" style="left:1208px;top:616px;width:105px;height:34px;"></div>
<svg style="left:1227px;top:620px" width="27" height="27" viewBox="0 0 27 27"><defs><linearGradient id="bx" x1="0" y1="0" x2="0" y2="1"><stop offset="0" stop-color="#F08A78"/><stop offset="1" stop-color="#C73A2A"/></linearGradient></defs>
<path d="M1 3.500l3.500-3l9 9.500l9-9.500l3.500 3l-9.500 10l9.500 10l-3.500 3l-9-9.500l-9 9.500l-3.500-3l9.500-10z" fill="url(#bx)" stroke="#B8402E" stroke-width="0.800" stroke-linejoin="round"/></svg>
<div class="t" style="left:1260px;top:624px;width:50px;height:18px;line-height:18px;letter-spacing:-0.1px"><u>V</u>azgeç</div>
<div class="badge" style="left:10.9px;top:514.6px">1</div>
<div class="badge" style="left:98.9px;top:648.8px">2</div>
<div class="badge" style="left:146.9px;top:601.6px">3</div>
<div class="badge" style="left:384.9px;top:481.6px;font-weight:bold">4</div>
<div class="badge" style="left:1063.0px;top:618.6px">5</div>
</body></html>
